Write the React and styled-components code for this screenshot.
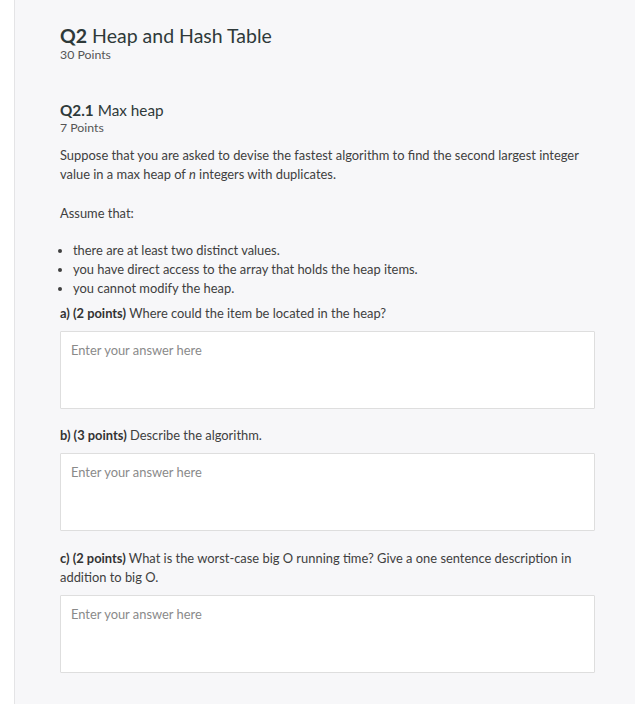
import React from "react";
import styled, { createGlobalStyle } from "styled-components";

const Global = createGlobalStyle`
  html, body { margin: 0; padding: 0; background: #ffffff; }
  body { font-family: Lato, "Open Sans", sans-serif; color: #3a3a3a; }
  * { box-sizing: border-box; }
`;

const Page = styled.div`
  display: flex;
  min-height: 704px;
`;

const Gutter = styled.div`
  width: 14px;
  flex-shrink: 0;
  background: #ffffff;
`;

const Panel = styled.main`
  flex: 1;
  background: #f7f7f9;
  border-left: 1px solid #e4e4e6;
  padding: 25px 40px 30px 45px;
`;

const Content = styled.div`
  width: 535px;
  display: flex;
  flex-direction: column;
`;

const QuestionTitle = styled.h1`
  margin: 0;
  font-size: 19.5px;
  line-height: 22px;
  font-weight: 400;
  color: #2f3a3a;
  b { font-weight: 700; }
`;

const Points = styled.div`
  font-size: 12.3px;
  line-height: 16px;
  color: #555;
`;

const SubTitle = styled.h2`
  margin: 37px 0 0;
  font-size: 15.3px;
  line-height: 20px;
  font-weight: 400;
  color: #2f3a3a;
  b { font-weight: 700; }
`;

const Para = styled.p`
  margin: ${(p) => p.$top || 0}px 0 0;
  font-size: 12.9px;
  line-height: 19px;
  color: #404040;
  b { font-weight: 700; color: #333; }
  i { font-style: italic; }
`;

const List = styled.ul`
  margin: 18px 0 0;
  padding-left: 13px;
  font-size: 12.9px;
  line-height: 19px;
  color: #404040;
`;

const Answer = styled.textarea`
  margin-top: 8px;
  width: 535px;
  height: 78px;
  resize: none;
  border: 1px solid #dedede;
  border-radius: 1px;
  background: #fff;
  padding: 9px 10px;
  font-family: Lato, "Open Sans", sans-serif;
  font-size: 12.9px;
  line-height: 18px;
  color: #333;
  outline: none;
  &::placeholder { color: #8a8a8a; }
`;

export default function App() {
  return (
    <>
      <Global />
      <Page>
        <Gutter />
        <Panel>
          <Content>
            <QuestionTitle><b>Q2</b> Heap and Hash Table</QuestionTitle>
            <Points>30 Points</Points>
            <SubTitle><b>Q2.1</b> Max heap</SubTitle>
            <Points>7 Points</Points>
            <Para $top={10}>
              Suppose that you are asked to devise the fastest algorithm to find the second largest integer value in a max heap of <i>n</i> integers with duplicates.
            </Para>
            <Para $top={20}>Assume that:</Para>
            <List>
              <li>there are at least two distinct values.</li>
              <li>you have direct access to the array that holds the heap items.</li>
              <li>you cannot modify the heap.</li>
            </List>
            <Para $top={6}><b>a) (2 points)</b> Where could the item be located in the heap?</Para>
            <Answer placeholder="Enter your answer here" />
            <Para $top={17}><b>b) (3 points)</b> Describe the algorithm.</Para>
            <Answer placeholder="Enter your answer here" />
            <Para $top={18}><b>c) (2 points)</b> What is the worst-case big O running time? Give a one sentence description in addition to big O.</Para>
            <Answer placeholder="Enter your answer here" />
          </Content>
        </Panel>
      </Page>
    </>
  );
}
